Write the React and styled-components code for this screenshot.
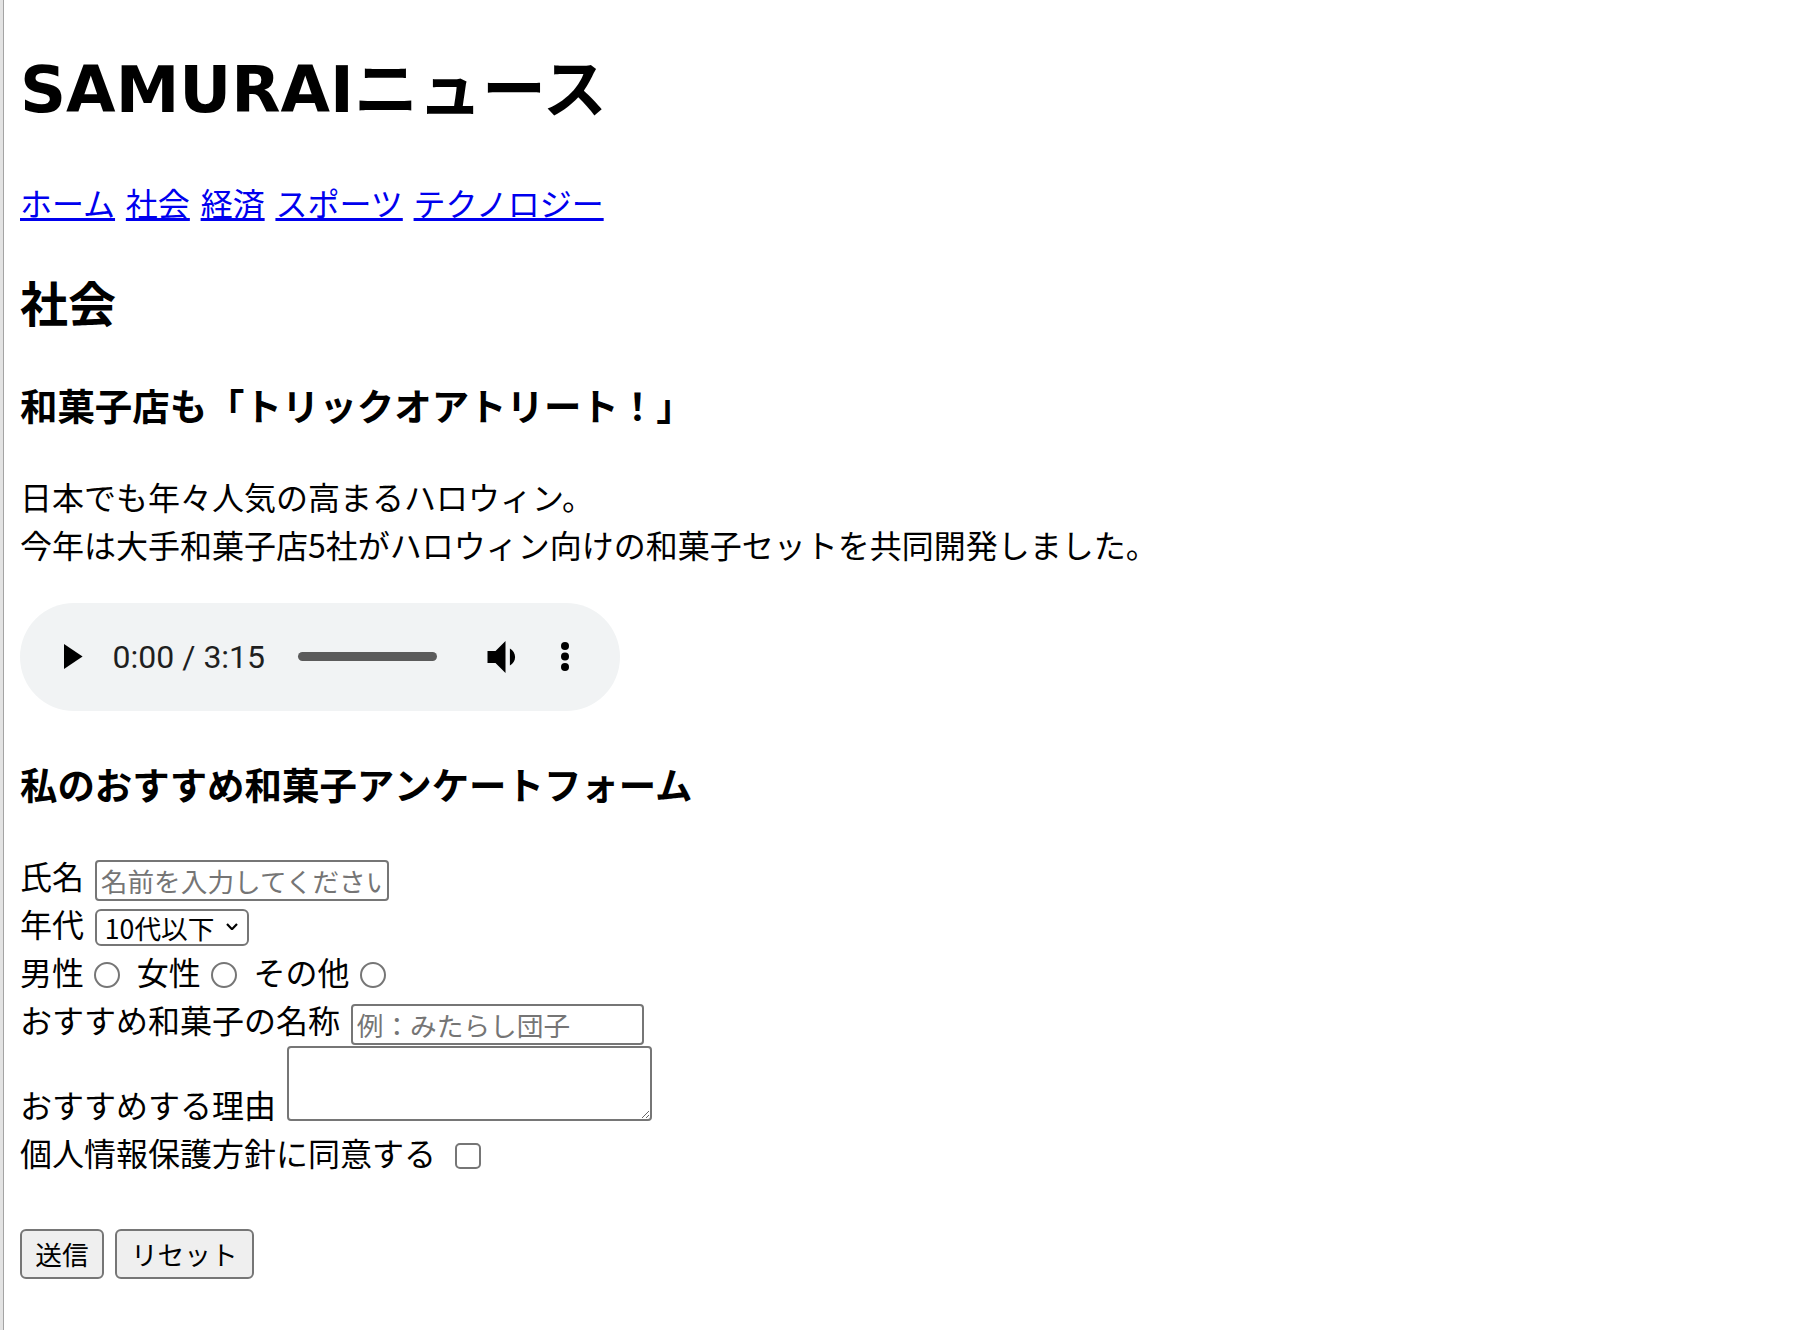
import React from "react";
import styled, { createGlobalStyle } from "styled-components";

const GlobalStyle = createGlobalStyle`
  html, body {
    margin: 0;
    padding: 0;
    background: #ffffff;
  }
  body {
    font-family: "Noto Sans CJK JP", sans-serif;
    color: #000000;
  }
`;

const Frame = styled.div`
  display: flex;
  min-height: 1330px;
  background: #ffffff;
`;

const WindowEdge = styled.div`
  flex: 0 0 3px;
  background: #e3e3e3;
  border-right: 1px solid #a4a4a4;
`;

/* The reference is a 2x capture: the page is drawn at CSS sizes and zoomed. */
const Page = styled.main`
  flex: 1;
  zoom: 2;
  padding: 0 8px;
  font-family: "Noto Sans CJK JP", sans-serif;
  font-size: 16px;
  line-height: 1.5;
  word-spacing: 1.8px;
  color: #000000;
`;

/* Single-line blocks keep a 1.5em box; the glyphs sit 0.1em higher (Hiragino-like). */
const Title = styled.h1`
  margin: 21.44px 0;
  padding-bottom: 6.4px;
  font-size: 32px;
  line-height: 41.6px;
  font-weight: 700;
`;

const LatinPart = styled.span`
  font-family: "DejaVu Sans", sans-serif;
  line-height: 1;
`;

const Nav = styled.nav`
  display: block;
  padding-bottom: 3.2px;
  line-height: 20.8px;
`;

const NavLink = styled.a`
  color: #0000ee;
  text-decoration: underline;
  cursor: pointer;
`;

const SectionTitle = styled.h2`
  margin: 19.92px 0;
  padding-bottom: 4.8px;
  font-size: 24px;
  line-height: 31.2px;
  font-weight: 700;
`;

const ArticleTitle = styled.h3`
  margin: 18.72px 0;
  padding-bottom: 3.744px;
  font-size: 18.72px;
  line-height: 24.336px;
  font-weight: 700;
`;

const Paragraph = styled.p`
  margin: -1.6px 0 17.6px;
`;

const AudioBlock = styled.div`
  padding-bottom: 5.92px;
`;

const AudioPlayer = styled.div`
  display: flex;
  align-items: center;
  width: 300px;
  height: 54px;
  box-sizing: border-box;
  padding-left: 22px;
  border-radius: 27px;
  background: #f1f3f4;
`;

const PlayIcon = styled.svg`
  flex: none;
  width: 9.3px;
  height: 12.5px;
`;

const TimeText = styled.span`
  flex: none;
  margin-left: 15px;
  font-family: Roboto, "Liberation Sans", sans-serif;
  font-size: 16px;
  line-height: 1;
  word-spacing: normal;
  color: #1f1f1f;
`;

const Timeline = styled.div`
  flex: none;
  margin-left: 16.5px;
  width: 69.5px;
  height: 4.5px;
  border-radius: 2.25px;
  background: #5b5b5b;
`;

const VolumeIcon = styled.svg`
  flex: none;
  margin-left: 24px;
  width: 16px;
  height: 16px;
`;

const MenuIcon = styled.svg`
  flex: none;
  margin-left: 22px;
  width: 4px;
  height: 14.5px;
`;

const SurveyForm = styled.form`
  margin: 0;
`;

const FieldRow = styled.div`
  line-height: 24px;
`;

const FieldLabel = styled.label`
  vertical-align: 1.6px;
  line-height: 1;
`;

const TextInput = styled.input`
  box-sizing: border-box;
  width: ${(p) => p.$width}px;
  height: 20.5px;
  margin: 0;
  padding: 1px 2px;
  border: 1px solid #767676;
  border-radius: 2px;
  background: #ffffff;
  font-family: "Noto Sans CJK JP", sans-serif;
  font-size: 13.333px;
  line-height: normal;
  word-spacing: normal;
  color: #000000;
  &::placeholder {
    color: #757575;
  }
`;

const SelectBox = styled.span`
  position: relative;
  display: inline-block;
  vertical-align: top;
  margin-top: 3.5px;
  line-height: 0;
`;

const Select = styled.select`
  appearance: none;
  -webkit-appearance: none;
  display: block;
  box-sizing: border-box;
  width: 77px;
  height: 18.5px;
  margin: 0;
  padding: 0 0 0 4px;
  border: 1px solid #767676;
  border-radius: 3px;
  background: #ffffff;
  font-family: "Noto Sans CJK JP", sans-serif;
  font-size: 13.333px;
  line-height: 16.5px;
  word-spacing: normal;
  color: #000000;
`;

const Chevron = styled.svg`
  position: absolute;
  right: 5.5px;
  top: 7px;
  width: 6px;
  height: 3.8px;
  pointer-events: none;
`;

const Radio = styled.input`
  margin: 3px 3px 0 5px;
`;

const Checkbox = styled.input`
  margin: 3px 3px 3px 4px;
`;

const TextArea = styled.textarea`
  box-sizing: border-box;
  width: 182.5px;
  height: 37.5px;
  margin: 0;
  padding: 2px;
  border: 1px solid #767676;
  border-radius: 2px;
  font-family: "Noto Sans CJK JP", sans-serif;
  font-size: 13.333px;
  word-spacing: normal;
`;

const ButtonRow = styled.div`
  margin-top: 24px;
  line-height: 24px;
`;

const FormButton = styled.button`
  box-sizing: border-box;
  width: ${(p) => p.$width}px;
  height: 25px;
  margin: 0;
  padding: 1px 6px;
  border: 1px solid #767676;
  border-radius: 3px;
  background: #efefef;
  font-family: "Noto Sans CJK JP", sans-serif;
  font-size: 13.333px;
  line-height: 20px;
  word-spacing: normal;
  color: #000000;
`;

const navItems = ["ホーム", "社会", "経済", "スポーツ", "テクノロジー"];

export default function App() {
  return (
    <>
      <GlobalStyle />
      <Frame>
        <WindowEdge />
        <Page>
          <Title>
            <LatinPart>SAMURAI</LatinPart>ニュース
          </Title>
          <Nav>
            {navItems.map((item, i) => (
              <React.Fragment key={item}>
                {i > 0 && " "}
                <NavLink href="#">{item}</NavLink>
              </React.Fragment>
            ))}
          </Nav>
          <SectionTitle>社会</SectionTitle>
          <ArticleTitle>和菓子店も「トリックオアトリート！」</ArticleTitle>
          <Paragraph>
            日本でも年々人気の高まるハロウィン。
            <br />
            今年は大手和菓子店5社がハロウィン向けの和菓子セットを共同開発しました。
          </Paragraph>
          <AudioBlock>
            <AudioPlayer>
              <PlayIcon viewBox="0 0 9.3 12.5">
                <path d="M0 0 L9.3 6.25 L0 12.5 Z" fill="#000" />
              </PlayIcon>
              <TimeText>0:00 / 3:15</TimeText>
              <Timeline />
              <VolumeIcon viewBox="4 4 15.5 16">
                <path
                  d="M5 9v6h4l5 5V4L9 9H5z M18.8 12c0-1.9-1.1-3.5-2.6-4.3v8.6c1.5-.8 2.6-2.4 2.6-4.3z"
                  fill="#000"
                />
              </VolumeIcon>
              <MenuIcon viewBox="0 0 4 14.5">
                <circle cx="2" cy="2" r="2" fill="#000" />
                <circle cx="2" cy="7.25" r="2" fill="#000" />
                <circle cx="2" cy="12.5" r="2" fill="#000" />
              </MenuIcon>
            </AudioPlayer>
          </AudioBlock>
          <ArticleTitle>私のおすすめ和菓子アンケートフォーム</ArticleTitle>
          <SurveyForm onSubmit={(e) => e.preventDefault()}>
            <FieldRow>
              <FieldLabel htmlFor="name">氏名</FieldLabel>{" "}
              <TextInput id="name" type="text" $width={147} placeholder="名前を入力してください" />
            </FieldRow>
            <FieldRow>
              <FieldLabel htmlFor="age">年代</FieldLabel>{" "}
              <SelectBox>
                <Select id="age" defaultValue="10">
                  <option value="10">10代以下</option>
                  <option value="20">20代</option>
                  <option value="30">30代</option>
                  <option value="40">40代以上</option>
                </Select>
                <Chevron viewBox="0 0 6 3.8">
                  <polyline
                    points="0.5,0.5 3,3.1 5.5,0.5"
                    fill="none"
                    stroke="#000"
                    strokeWidth="1.1"
                  />
                </Chevron>
              </SelectBox>
            </FieldRow>
            <FieldRow>
              <FieldLabel htmlFor="male">男性</FieldLabel>
              <Radio id="male" type="radio" name="gender" />{" "}
              <FieldLabel htmlFor="female">女性</FieldLabel>
              <Radio id="female" type="radio" name="gender" />{" "}
              <FieldLabel htmlFor="other">その他</FieldLabel>
              <Radio id="other" type="radio" name="gender" />
            </FieldRow>
            <FieldRow>
              <FieldLabel htmlFor="sweet">おすすめ和菓子の名称</FieldLabel>{" "}
              <TextInput id="sweet" type="text" $width={146.5} placeholder="例：みたらし団子" />
            </FieldRow>
            <FieldRow>
              <FieldLabel htmlFor="reason">おすすめする理由</FieldLabel>{" "}
              <TextArea id="reason" />
            </FieldRow>
            <FieldRow>
              <FieldLabel htmlFor="agree">個人情報保護方針に同意する</FieldLabel>{" "}
              <Checkbox id="agree" type="checkbox" />
            </FieldRow>
            <ButtonRow>
              <FormButton type="submit" $width={42}>送信</FormButton>{" "}
              <FormButton type="reset" $width={69.5}>リセット</FormButton>
            </ButtonRow>
          </SurveyForm>
        </Page>
      </Frame>
    </>
  );
}
